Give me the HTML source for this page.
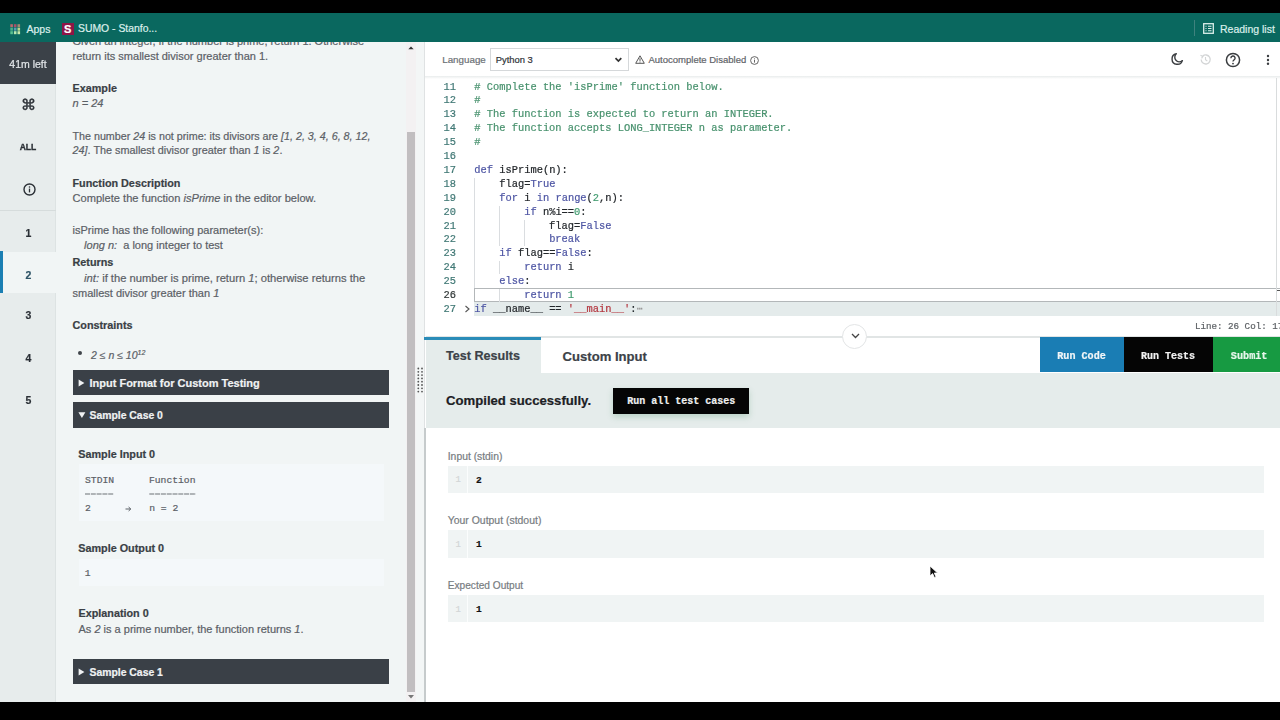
<!DOCTYPE html>
<html><head><meta charset="utf-8">
<style>
*{box-sizing:border-box;margin:0;padding:0}
html,body{width:1280px;height:720px;overflow:hidden;background:#000;font-family:"Liberation Sans",sans-serif;position:relative;-webkit-text-stroke-width:0.2px}
.a{position:absolute;white-space:pre;line-height:1}
.bx{position:absolute}
.z{z-index:5}
#top{position:absolute;left:0;top:0;width:1280px;height:13px;background:#000}
#bm{position:absolute;left:0;top:13px;width:1280px;height:29px;background:#0a685f}
#bot{position:absolute;left:0;top:702px;width:1280px;height:18px;background:#000}
#nav{position:absolute;left:0;top:42px;width:56px;height:660px;background:#e7ecec;border-right:1px solid #dde3e3}
#timer{position:absolute;left:0;top:42px;width:56px;height:42px;background:#3b4148;color:#e3e7ea;font-size:10.5px;text-align:center;line-height:44.5px}
#lp{position:absolute;left:56px;top:42px;width:350px;height:660px;background:#f1f5f5;overflow:hidden}
#sb{position:absolute;left:406px;top:42px;width:10px;height:660px;background:#f3f1f2}
#thumb{position:absolute;left:407px;top:132px;width:7.5px;height:560px;background:#c1bec0}
#split{position:absolute;left:416px;top:42px;width:8px;height:660px;background:#f3f6f6}
#rp{position:absolute;left:423.5px;top:42px;width:856.5px;height:660px;background:#fff;border-left:1.5px solid #dfe2e3}
.nv{position:absolute;left:0;width:56px;text-align:center;font-weight:700;color:#2b3036;font-size:9.5px}
.t{color:#5b6066;font-size:11px}
.h{color:#3a3f45;font-size:10.8px;font-weight:700}
.bar{position:absolute;left:72.5px;width:316.5px;height:25.5px;background:#3a4047;color:#f0f2f3;font-weight:700;font-size:11px}
.bar span{position:absolute;left:17px;top:8.5px;white-space:pre}
.bar i{position:absolute;left:6px;top:9px;width:0;height:0;border-top:4px solid transparent;border-bottom:4px solid transparent;border-left:6px solid #f0f2f3}
.bar i.dn{border-left:4px solid transparent;border-right:4px solid transparent;border-top:6px solid #f0f2f3;border-bottom:0;top:10px;left:5px}
.mono{font-family:"Liberation Mono",monospace}
.cl{position:absolute;left:0;height:13.88px;line-height:13.88px;font-family:"Liberation Mono",monospace;font-size:10.4px;white-space:pre}
.ln{position:absolute;left:424px;width:32px;text-align:right;color:#3f7774}
.cd{position:absolute;left:474.3px;color:#23272b}
.cm{color:#47916d}.kw{color:#4d55a3}.nm{color:#3f9a6e}.st{color:#b3363f}
.guide{position:absolute;width:1px;background:#dadde0}
</style></head><body><div id="wrap" style="position:absolute;left:0;top:0;width:1280px;height:720px;filter:blur(0.35px)">
<div id="top"></div>
<div id="bm"></div>
<div id="bot"></div>

<!-- bookmarks bar -->
<svg class="bx" style="left:10px;top:24px" width="11" height="11" viewBox="0 0 11 11">
<rect x="0.3" y="0.2" width="2.6" height="3" fill="#b86a6e"/><rect x="3.9" y="0.2" width="2.6" height="3" fill="#a8506a"/><rect x="7.5" y="0.2" width="2.6" height="3" fill="#a08a70"/>
<rect x="0.3" y="3.7" width="2.6" height="3" fill="#49b08c"/><rect x="3.9" y="3.7" width="2.6" height="3" fill="#5a9ab0"/><rect x="7.5" y="3.7" width="2.6" height="3" fill="#b8d890"/>
<rect x="0.3" y="7.2" width="2.6" height="3" fill="#5ac090"/><rect x="3.9" y="7.2" width="2.6" height="3" fill="#b8e8b0"/><rect x="7.5" y="7.2" width="2.6" height="3" fill="#c8e8a8"/>
</svg>
<div class="a" style="left:26.5px;top:24.3px;font-size:10.5px;color:#dcefeb">Apps</div>
<div class="bx z" style="left:62px;top:23px;width:11.5px;height:12px;background:#8e1546;color:#fff;font-weight:700;font-size:11px;line-height:12px;text-align:center">S</div>
<div class="a z" style="left:78px;top:24.3px;font-size:10.4px;color:#dcefeb">SUMO - Stanfo...</div>
<div class="bx" style="left:1194px;top:20px;width:1px;height:16px;background:#3f827e"></div>
<svg class="bx" style="left:1203px;top:23px" width="11" height="11" viewBox="0 0 11 11"><rect x="0.7" y="0.7" width="9.6" height="9.6" fill="none" stroke="#dcefeb" stroke-width="1.3"/><path d="M2.5 3.2h1M5 3.2h3.5M2.5 5.5h1M5 5.5h3.5M2.5 7.8h1M5 7.8h3.5" stroke="#dcefeb" stroke-width="1.1"/></svg>
<div class="a" style="left:1220px;top:24.3px;font-size:10.5px;color:#dcefeb">Reading list</div>

<!-- nav -->
<div id="nav"></div>
<div id="timer">41m left</div>
<div class="nv" style="top:96.4px;font-size:15px;font-weight:400;color:#2b3036;-webkit-text-stroke-width:0.45px">&#8984;</div>
<div class="nv" style="top:141.3px;font-size:9.9px;transform:scaleX(0.86);-webkit-text-stroke-width:0.4px">ALL</div>
<svg class="bx" style="left:22.5px;top:182.5px" width="13" height="13" viewBox="0 0 13 13"><circle cx="6.5" cy="6.5" r="5.5" fill="none" stroke="#2b3036" stroke-width="1.4"/><rect x="5.85" y="5.6" width="1.3" height="3.8" fill="#2b3036"/><circle cx="6.5" cy="4" r="0.8" fill="#2b3036"/></svg>
<div class="bx" style="left:0;top:210px;width:56px;height:1px;background:#d6dcdc"></div>
<div class="nv" style="top:226.9px;font-size:10.5px;left:0.5px">1</div>
<div class="bx" style="left:0;top:252px;width:56px;height:41px;background:#f1f5f5"></div>
<div class="bx" style="left:0;top:251px;width:2.5px;height:42px;background:#1b7fb3"></div>
<div class="nv" style="top:268.7px;font-size:10.5px;left:0.5px;color:#2d5366">2</div>
<div class="nv" style="top:309.2px;font-size:10.5px;left:0.5px">3</div>
<div class="nv" style="top:352.3px;font-size:10.5px;left:0.5px">4</div>
<div class="nv" style="top:394.1px;font-size:10.5px;left:0.5px">5</div>

<!-- left panel -->
<div id="lp"></div>
<div class="a t" style="left:72.5px;top:36.09px;font-size:11px;">Given an integer, if the number is prime, return 1. Otherwise</div>
<div class="bx" style="left:56px;top:13px;width:350px;height:29px;background:#0a685f"></div>
<div class="a t" style="left:72.5px;top:50.59px;font-size:11px;">return its smallest divisor greater than 1.</div>
<div class="a h" style="left:72.5px;top:82.66px;font-size:10.8px;">Example</div>
<div class="a t" style="left:72.5px;top:98.39px;font-size:11px;"><i>n = 24</i></div>
<div class="a t" style="left:72.5px;top:131.12px;font-size:10.73px;">The number <i>24</i> is not prime: its divisors are <i>[1, 2, 3, 4, 6, 8, 12,</i></div>
<div class="a t" style="left:72.5px;top:145.38px;font-size:10.83px;"><i>24]</i>. The smallest divisor greater than <i>1</i> is <i>2</i>.</div>
<div class="a h" style="left:72.5px;top:177.56px;font-size:10.8px;">Function Description</div>
<div class="a t" style="left:72.5px;top:192.90px;font-size:11.1px;">Complete the function <i>isPrime</i> in the editor below.</div>
<div class="a t" style="left:72.5px;top:225.24px;font-size:11px;">isPrime has the following parameter(s):</div>
<div class="a t" style="left:84.1px;top:240.49px;font-size:11px;"><i>long n:</i>  a long integer to test</div>
<div class="a h" style="left:72.5px;top:257.26px;font-size:10.8px;">Returns</div>
<div class="a t" style="left:84.1px;top:272.57px;font-size:11.2px;"><i>int:</i> if the number is prime, return <i>1</i>; otherwise returns the</div>
<div class="a t" style="left:72.5px;top:287.74px;font-size:11px;">smallest divisor greater than <i>1</i></div>
<div class="a h" style="left:72.5px;top:320.06px;font-size:10.8px;">Constraints</div>
<div class="bx" style="left:78.4px;top:350.5px;width:4px;height:4px;border-radius:50%;background:#3f444a"></div>
<div class="a t" style="left:91px;top:348.16px;font-size:10.5px;"><i>2 &#8804; n &#8804; 10<sup style="font-size:7px;vertical-align:4.5px">12</sup></i></div>
<div class="bar" style="top:369.5px;height:25.40px"><svg class="bx" style="left:5px;top:9.5px" width="8" height="8" viewBox="0 0 8 8"><path d="M0.6 0.4 L6.4 3.9 L0.6 7.4 Z" fill="#f0f2f3"/></svg><span style="left:17px;top:7.44px;font-size:11px">Input Format for Custom Testing</span></div>
<div class="bar" style="top:402.25px;height:25.50px"><svg class="bx" style="left:5px;top:10px" width="8" height="7" viewBox="0 0 8 7"><path d="M0.4 0.3 L7.4 0.3 L3.9 5.9 Z" fill="#f0f2f3"/></svg><span style="left:17px;top:7.70px;font-size:10.4px">Sample Case 0</span></div>
<div class="a h" style="left:78.3px;top:449.16px;font-size:10.8px;">Sample Input 0</div>
<div class="bx" style="left:78.5px;top:464.4px;width:305.5px;height:56.7px;background:#f4f8fa"></div>
<div class="a mono" style="left:85px;top:475.56px;font-size:9.7px;color:#5b6066">STDIN      Function</div>
<svg class="bx" style="left:85px;top:492.5px" width="112" height="2" viewBox="0 0 112 2"><path d="M0 1 H28.5 M64.3 1 H111" stroke="#6b7075" stroke-width="1.1" stroke-dasharray="5 0.8"/></svg>
<div class="a mono" style="left:85px;top:503.96px;font-size:9.7px;color:#5b6066">2</div>
<svg class="bx" style="left:125px;top:505.5px" width="7" height="6" viewBox="0 0 7 6"><path d="M0.5 3 H5.5 M3.6 1 L5.8 3 L3.6 5" fill="none" stroke="#5b6066" stroke-width="1"/></svg>
<div class="a mono" style="left:149.2px;top:503.96px;font-size:9.7px;color:#5b6066">n = 2</div>
<div class="a h" style="left:78.3px;top:542.76px;font-size:10.8px;">Sample Output 0</div>
<div class="bx" style="left:78.5px;top:558.75px;width:305.5px;height:27.5px;background:#f4f8fa"></div>
<div class="a mono" style="left:84.75px;top:568.66px;font-size:9.7px;color:#5b6066">1</div>
<div class="a h" style="left:78.5px;top:607.91px;font-size:10.8px;">Explanation 0</div>
<div class="a t" style="left:78.5px;top:623.99px;font-size:11px;">As <i>2</i> is a prime number, the function returns <i>1</i>.</div>
<div class="bar" style="top:658.75px;height:25.45px"><svg class="bx" style="left:5px;top:9.5px" width="8" height="8" viewBox="0 0 8 8"><path d="M0.6 0.4 L6.4 3.9 L0.6 7.4 Z" fill="#f0f2f3"/></svg><span style="left:17px;top:7.85px;font-size:10.4px">Sample Case 1</span></div>

<div id="sb"></div>
<div id="thumb"></div>
<svg class="bx" style="left:406px;top:45px" width="10" height="6" viewBox="0 0 10 6"><path d="M2.3 4.2 L5 1.6 L7.7 4.2Z" fill="#333"/></svg>
<svg class="bx" style="left:406px;top:694px" width="10" height="6" viewBox="0 0 10 6"><path d="M2 1 L5 4.5 L8 1Z" fill="#777"/></svg>
<div id="split"></div>
<svg class="bx" style="left:417px;top:367px" width="7" height="26" viewBox="0 0 7 26">
<g fill="#555"><circle cx="1.3" cy="1.5" r="0.9"/><circle cx="5" cy="1.5" r="0.9"/><circle cx="1.3" cy="4.8" r="0.9"/><circle cx="5" cy="4.8" r="0.9"/><circle cx="1.3" cy="8.1" r="0.9"/><circle cx="5" cy="8.1" r="0.9"/><circle cx="1.3" cy="11.4" r="0.9"/><circle cx="5" cy="11.4" r="0.9"/><circle cx="1.3" cy="14.7" r="0.9"/><circle cx="5" cy="14.7" r="0.9"/><circle cx="1.3" cy="18" r="0.9"/><circle cx="5" cy="18" r="0.9"/><circle cx="1.3" cy="21.3" r="0.9"/><circle cx="5" cy="21.3" r="0.9"/><circle cx="1.3" cy="24.6" r="0.9"/><circle cx="5" cy="24.6" r="0.9"/></g></svg>

<!-- right panel -->
<div id="rp"></div>
<!-- header -->
<div class="bx" style="left:426px;top:42px;width:854px;height:34px;background:#fff"></div>
<div class="bx" style="left:425px;top:76px;width:855px;height:3px;background:linear-gradient(#e9ecec,#fff)"></div>
<div class="a" style="left:442.2px;top:54.5px;font-size:9.8px;color:#6b7075">Language</div>
<div class="bx" style="left:489.5px;top:48px;width:139.5px;height:23px;border:1px solid #d5d8da;background:#fff"></div>
<div class="a" style="left:495.7px;top:54.5px;font-size:9.4px;color:#2f3337">Python 3</div>
<svg class="bx" style="left:613.5px;top:56.5px" width="9" height="6" viewBox="0 0 9 6"><path d="M1.5 1.2 L4.4 4.1 L7.3 1.2" fill="none" stroke="#333" stroke-width="1.7"/></svg>
<svg class="bx" style="left:635px;top:55px" width="10" height="9" viewBox="0 0 10 9"><path d="M5 0.8 L9.3 8.3 L0.7 8.3 Z" fill="none" stroke="#555" stroke-width="1"/><rect x="4.5" y="3.2" width="1" height="2.7" fill="#555"/><rect x="4.5" y="6.5" width="1" height="1" fill="#555"/></svg>
<div class="a" style="left:648.5px;top:55px;font-size:9.5px;color:#5f6469">Autocomplete Disabled</div>
<svg class="bx" style="left:750px;top:55.5px" width="9" height="9" viewBox="0 0 9 9"><circle cx="4.5" cy="4.5" r="3.9" fill="none" stroke="#555" stroke-width="0.9"/><rect x="4.05" y="3.8" width="0.9" height="2.8" fill="#555"/><circle cx="4.5" cy="2.7" r="0.5" fill="#555"/></svg>
<svg class="bx" style="left:1170px;top:52px" width="14" height="14" viewBox="0 0 14 14"><path d="M6.3 1.8 A5.3 5.3 0 1 0 12.4 8.6 A4.3 4.3 0 0 1 6.3 1.8 Z" fill="none" stroke="#3a3d40" stroke-width="1.4" stroke-linejoin="round"/></svg>
<svg class="bx" style="left:1199px;top:53px" width="13" height="13" viewBox="0 0 13 13"><path d="M2.2 6.5 A4.5 4.5 0 1 0 3.6 3.2" fill="none" stroke="#d3d5d6" stroke-width="1.3"/><path d="M1.5 2.2 L3.8 3.4 L2.6 5.4" fill="none" stroke="#d3d5d6" stroke-width="1.1"/><path d="M6.5 4 V6.8 L8.3 8" fill="none" stroke="#d3d5d6" stroke-width="1.1"/></svg>
<svg class="bx" style="left:1225px;top:52px" width="16" height="16" viewBox="0 0 16 16"><circle cx="8" cy="8" r="6.6" fill="none" stroke="#3a3d40" stroke-width="1.5"/><path d="M5.9 6.2 A2.1 2.1 0 1 1 8.9 8 C8.2 8.4 8 8.8 8 9.6" fill="none" stroke="#3a3d40" stroke-width="1.4"/><circle cx="8" cy="11.6" r="0.9" fill="#3a3d40"/></svg>
<svg class="bx" style="left:1265px;top:54px" width="6" height="12" viewBox="0 0 6 12"><circle cx="3" cy="2" r="1.2" fill="#3a3d40"/><circle cx="3" cy="6" r="1.2" fill="#3a3d40"/><circle cx="3" cy="9.8" r="1.2" fill="#3a3d40"/></svg>

<!-- editor -->
<div class="bx" style="left:426px;top:79px;width:854px;height:238px;background:#fff;overflow:hidden"></div>
<div class="bx" style="left:473.5px;top:288.00px;width:807px;height:13.6px;border:1.1px solid #b3b7b9;border-right:0"></div>
<div class="bx" style="left:473.5px;top:301.6px;width:807px;height:14.4px;background:#e4ebeb"></div>
<div class="guide" style="left:473.5px;top:177.80px;height:110.20px"></div>
<div class="guide" style="left:499px;top:205.60px;height:40.70px"></div>
<div class="guide" style="left:499px;top:261.20px;height:12.90px"></div>
<div class="guide" style="left:499px;top:289.00px;height:12.90px"></div>
<div class="guide" style="left:524.4px;top:219.50px;height:26.80px"></div>
<div class="cl" style="top:80.50px;width:1280px"><span class="ln" style="left:424px;color:#3f7774">11</span><span class="cd"><span class="cm"># Complete the 'isPrime' function below.</span></span></div>
<div class="cl" style="top:94.40px;width:1280px"><span class="ln" style="left:424px;color:#3f7774">12</span><span class="cd"><span class="cm">#</span></span></div>
<div class="cl" style="top:108.30px;width:1280px"><span class="ln" style="left:424px;color:#3f7774">13</span><span class="cd"><span class="cm"># The function is expected to return an INTEGER.</span></span></div>
<div class="cl" style="top:122.20px;width:1280px"><span class="ln" style="left:424px;color:#3f7774">14</span><span class="cd"><span class="cm"># The function accepts LONG_INTEGER n as parameter.</span></span></div>
<div class="cl" style="top:136.10px;width:1280px"><span class="ln" style="left:424px;color:#3f7774">15</span><span class="cd"><span class="cm">#</span></span></div>
<div class="cl" style="top:150.00px;width:1280px"><span class="ln" style="left:424px;color:#3f7774">16</span><span class="cd"></span></div>
<div class="cl" style="top:163.90px;width:1280px"><span class="ln" style="left:424px;color:#3f7774">17</span><span class="cd"><span class="kw">def</span> isPrime(n):</span></div>
<div class="cl" style="top:177.80px;width:1280px"><span class="ln" style="left:424px;color:#3f7774">18</span><span class="cd">    flag=<span class="kw">True</span></span></div>
<div class="cl" style="top:191.70px;width:1280px"><span class="ln" style="left:424px;color:#3f7774">19</span><span class="cd">    <span class="kw">for</span> i <span class="kw">in</span> <span class="kw">range</span>(<span class="nm">2</span>,n):</span></div>
<div class="cl" style="top:205.60px;width:1280px"><span class="ln" style="left:424px;color:#3f7774">20</span><span class="cd">        <span class="kw">if</span> n%i==<span class="nm">0</span>:</span></div>
<div class="cl" style="top:219.50px;width:1280px"><span class="ln" style="left:424px;color:#3f7774">21</span><span class="cd">            flag=<span class="kw">False</span></span></div>
<div class="cl" style="top:233.40px;width:1280px"><span class="ln" style="left:424px;color:#3f7774">22</span><span class="cd">            <span class="kw">break</span></span></div>
<div class="cl" style="top:247.30px;width:1280px"><span class="ln" style="left:424px;color:#3f7774">23</span><span class="cd">    <span class="kw">if</span> flag==<span class="kw">False</span>:</span></div>
<div class="cl" style="top:261.20px;width:1280px"><span class="ln" style="left:424px;color:#3f7774">24</span><span class="cd">        <span class="kw">return</span> i</span></div>
<div class="cl" style="top:275.10px;width:1280px"><span class="ln" style="left:424px;color:#3f7774">25</span><span class="cd">    <span class="kw">else</span>:</span></div>
<div class="cl" style="top:289.00px;width:1280px"><span class="ln" style="left:424px;color:#2f3636">26</span><span class="cd">        <span class="kw">return</span> <span class="nm">1</span></span></div>
<div class="cl" style="top:302.90px;width:1280px"><span class="ln" style="left:424px;color:#3f7774">27</span><span class="cd"><span class="kw">if</span> __name__ == <span class="st">'__main__'</span>:<span style="color:#999">&#8943;</span></span></div>
<svg class="bx" style="left:463.5px;top:305.3px" width="7" height="8" viewBox="0 0 7 8"><path d="M1.5 1 L5 4 L1.5 7" fill="none" stroke="#555" stroke-width="1.1"/></svg>
<div class="bx" style="left:1275.7px;top:78px;width:1px;height:238px;background:#d9dcdd"></div>
<div class="bx" style="left:1276.5px;top:289.5px;width:3.5px;height:1.6px;background:#555"></div>

<!-- status -->
<div class="a mono" style="left:1195px;top:322px;font-size:9.2px;color:#5b5f63">Line: 26 Col: 17</div>
<div class="bx" style="left:426px;top:336px;width:854px;height:1.5px;background:#e1e5e5"></div>
<div class="bx" style="left:842.2px;top:323.8px;width:25px;height:25px;border-radius:50%;border:1.2px solid #e3e5e6;background:#fff"></div>
<svg class="bx" style="left:850.5px;top:333px" width="9" height="6" viewBox="0 0 9 6"><path d="M1 1 L4.5 4.5 L8 1" fill="none" stroke="#444" stroke-width="1.3"/></svg>

<!-- tabs -->
<div class="bx" style="left:426px;top:340px;width:115px;height:33px;background:#e5eceb"></div>
<div class="bx" style="left:424px;top:337.2px;width:117px;height:2.8px;background:#2a8cb8"></div>
<div class="a" style="left:446px;top:350px;font-size:12.6px;font-weight:700;color:#3c4248">Test Results</div>
<div class="a" style="left:562.6px;top:350px;font-size:13.1px;font-weight:700;color:#3c4248">Custom Input</div>
<div class="bx" style="left:1040.2px;top:337.3px;width:83.5px;height:35px;background:#1a7db4"></div>
<div class="bx" style="left:1123.7px;top:337.3px;width:89.3px;height:35px;background:#050505"></div>
<div class="bx" style="left:1213px;top:337.3px;width:67px;height:35px;background:#179a42"></div>
<div class="a mono" style="left:1057.3px;top:352.3px;font-size:10.1px;font-weight:700;color:#f2f6f8">Run Code</div>
<div class="a mono" style="left:1141px;top:352.3px;font-size:10px;font-weight:700;color:#f2f2f2">Run Tests</div>
<div class="a mono" style="left:1230.8px;top:352.3px;font-size:10.2px;font-weight:700;color:#e6f6ea">Submit</div>

<!-- results -->
<div class="bx" style="left:426px;top:372.5px;width:854px;height:55.5px;background:#e5eceb"></div>
<div class="a" style="left:446px;top:394px;font-size:13.15px;font-weight:700;color:#1c2024">Compiled successfully.</div>
<div class="bx" style="left:613.4px;top:387.6px;width:136px;height:26px;background:#050505;box-shadow:0 3px 6px rgba(60,140,90,0.25)"></div>
<div class="a mono" style="left:627.2px;top:397px;font-size:10px;font-weight:700;color:#f0f0f0">Run all test cases</div>

<div class="bx" style="left:426px;top:428px;width:854px;height:274px;background:#fff"></div>
<div class="a" style="left:447.75px;top:451.6px;font-size:10.35px;color:#777c81">Input (stdin)</div>
<div class="bx" style="left:447.75px;top:466px;width:816px;height:26.7px;background:#f0f4f4"></div>
<div class="a mono" style="left:455.5px;top:476px;font-size:9px;color:#d3d6d7">1</div>
<div class="a mono" style="left:476px;top:475.6px;font-size:9.5px;font-weight:700;color:#111">2</div>
<div class="a" style="left:447.75px;top:516.1px;font-size:10.45px;color:#777c81">Your Output (stdout)</div>
<div class="bx" style="left:447.75px;top:530.1px;width:816px;height:27.8px;background:#f0f4f4"></div>
<div class="a mono" style="left:455.5px;top:540.8px;font-size:9px;color:#d3d6d7">1</div>
<div class="a mono" style="left:476px;top:540.3px;font-size:9.5px;font-weight:700;color:#111">1</div>
<div class="a" style="left:447.75px;top:580.8px;font-size:10.15px;color:#777c81">Expected Output</div>
<div class="bx" style="left:447.75px;top:595.2px;width:816px;height:27.2px;background:#f0f4f4"></div>
<div class="a mono" style="left:455.5px;top:605.8px;font-size:9px;color:#d3d6d7">1</div>
<div class="a mono" style="left:476px;top:605.3px;font-size:9.5px;font-weight:700;color:#111">1</div>
<div class="bx" style="left:467px;top:466px;width:1px;height:26.7px;background:#fbfdfd"></div><div class="bx" style="left:467px;top:530.1px;width:1px;height:27.8px;background:#fbfdfd"></div><div class="bx" style="left:467px;top:595.2px;width:1px;height:27.2px;background:#fbfdfd"></div><div class="bx" style="left:424px;top:428px;width:2px;height:274px;background:#c6cbcc"></div>

<!-- cursor -->
<svg class="bx" style="left:929px;top:565px" width="10" height="14" viewBox="0 0 10 14"><path d="M1 1 L1 11 L3.6 8.6 L5.4 12.6 L7 11.9 L5.3 8 L8.6 8 Z" fill="#111" stroke="#fff" stroke-width="0.8"/></svg>

</div></body></html>
